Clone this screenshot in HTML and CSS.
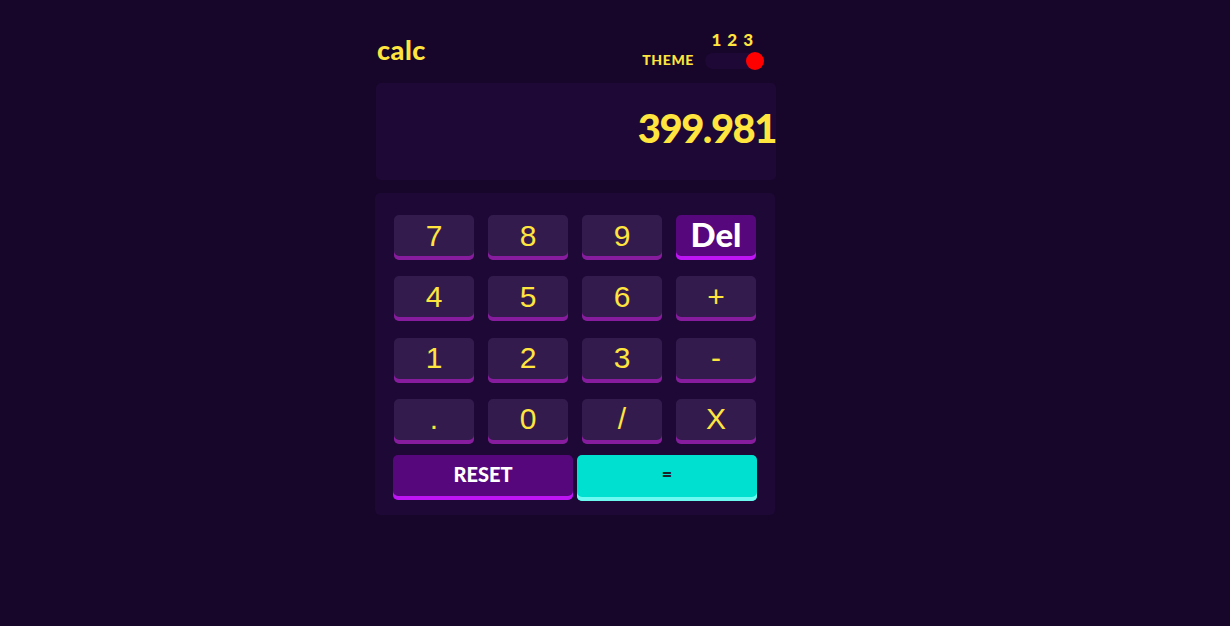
FILE: index.html
```html
<!DOCTYPE html>
<html lang="en">
<head>
<meta charset="utf-8">
<title>calc</title>
<link rel="stylesheet" href="styles.css">
</head>
<body>
<main class="calc">
  <header class="top">
    <h1 class="logo">calc</h1>
    <div class="theme">
      <span class="theme-label">THEME</span>
      <div class="switch">
        <div class="nums"><span>1</span><span>2</span><span>3</span></div>
        <div class="track"><span class="knob"></span></div>
      </div>
    </div>
  </header>
  <section class="screen">399.981</section>
  <section class="pad">
    <div class="grid">
      <button class="key">7</button>
      <button class="key">8</button>
      <button class="key">9</button>
      <button class="key key-del">Del</button>
      <button class="key">4</button>
      <button class="key">5</button>
      <button class="key">6</button>
      <button class="key">+</button>
      <button class="key">1</button>
      <button class="key">2</button>
      <button class="key">3</button>
      <button class="key">-</button>
      <button class="key">.</button>
      <button class="key">0</button>
      <button class="key">/</button>
      <button class="key">X</button>
    </div>
    <div class="bottom">
      <button class="key key-reset">RESET</button>
      <button class="key key-eq">=</button>
    </div>
  </section>
</main>
</body>
</html>
```
FILE: styles.css
```css
* { box-sizing: border-box; }
html, body { margin: 0; padding: 0; }
body {
  background: #17062a;
  font-family: "Lato", "Liberation Sans", sans-serif;
  color: #ffe53d;
  height: 626px;
}
.calc {
  width: 400px;
  margin-left: 376px;
  padding-top: 30px;
}
.top {
  display: flex;
  justify-content: space-between;
  align-items: flex-end;
  height: 44px;
  padding-left: 1px;
  padding-right: 13px;
}
.logo {
  margin: 0;
  font-size: 27px;
  font-weight: 900;
  line-height: 1;
  letter-spacing: 0.5px;
  padding-bottom: 11px;
}
.theme {
  display: flex;
  align-items: flex-end;
  gap: 11px;
  margin-bottom: 5px;
}
.theme-label {
  font-size: 14px;
  font-weight: 900;
  letter-spacing: 0.6px;
  line-height: 1;
  padding-bottom: 2px;
}
.switch {
  display: flex;
  flex-direction: column;
  align-items: stretch;
  width: 58px;
}
.nums {
  display: flex;
  justify-content: flex-end;
  gap: 6px;
  padding-right: 10px;
  font-size: 17px;
  font-weight: 900;
  line-height: 1;
  margin-bottom: 5px;
}
.track {
  position: relative;
  height: 16px;
  border-radius: 8px;
  background: #1e0836;
}
.knob {
  position: absolute;
  right: -1px;
  top: -1px;
  width: 18px;
  height: 18px;
  border-radius: 50%;
  background: #ff0000;
}
.screen {
  margin-top: 9px;
  height: 97px;
  background: #1e0836;
  border-radius: 5px;
  display: flex;
  justify-content: flex-end;
  align-items: center;
  font-size: 40px;
  font-weight: 900;
  letter-spacing: -1.5px;
  padding-bottom: 8px;
  padding-right: 0;
}
.pad {
  width: 400px;
  margin-top: 13px;
  margin-left: -1px;
  background: #1e0836;
  border-radius: 5px;
  padding: 22px 19px 14px 19px;
}
.grid {
  display: grid;
  grid-template-columns: repeat(4, 80px);
  grid-template-rows: 45px 45px 45px 45px;
  column-gap: 14px;
  row-gap: 16.3px;
}
.key {
  height: 45px;
  border: 0;
  border-radius: 5px;
  background: #331c4d;
  box-shadow: inset 0 -4px 0 #881c9e;
  color: #ffe53d;
  font-family: "Liberation Sans", Arial, sans-serif;
  font-size: 30px;
  line-height: 1;
  padding: 0 0 4px 0;
  display: flex;
  align-items: center;
  justify-content: center;
}
.key-del {
  background: #56077c;
  box-shadow: inset 0 -4px 0 #be15f4;
  color: #ffffff;
  font-family: "Lato", sans-serif;
  font-weight: 900;
  font-size: 33px;
  padding-bottom: 6px;
}
.bottom {
  display: flex;
  gap: 4px;
  margin-top: 11px;
  margin-left: -1px;
  margin-right: -1px;
}
.bottom .key { flex: 1; }
.key-reset {
  background: #56077c;
  box-shadow: inset 0 -4px 0 #be15f4;
  color: #ffffff;
  font-family: "Lato", sans-serif;
  font-weight: 900;
  font-size: 20px;
  padding-bottom: 7px;
}
.key-eq {
  height: 46px;
  background: #00e0d1;
  box-shadow: inset 0 -4px 0 #6cf9f1;
  color: #1a2327;
  font-family: "Lato", sans-serif;
  font-weight: 900;
  font-size: 18px;
  padding-bottom: 8px;
}
```
